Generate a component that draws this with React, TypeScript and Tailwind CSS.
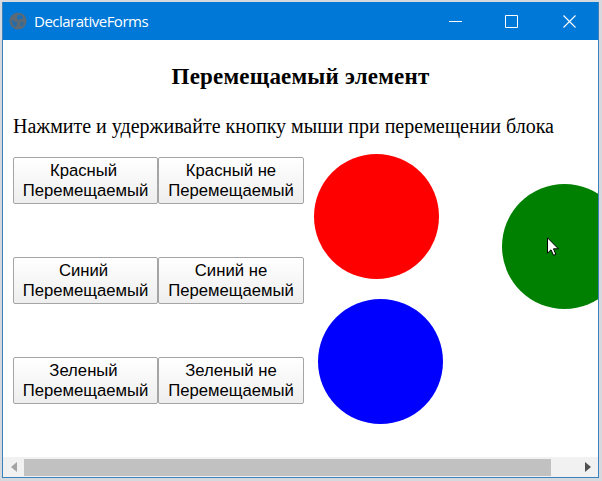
import React from "react";

const rows = ["Красный", "Синий", "Зеленый"];

function ActionButton({ label, width, labelClass = "" }: { label: string; width: string; labelClass?: string }) {
  return (
    <button
      className={`${width} h-[47px] shrink-0 rounded-[2px] border border-[#a5a5a5] bg-linear-to-b from-white to-[#eeeeee] text-center font-['Liberation_Sans',Arial,sans-serif] text-[16.7px] leading-[20px] text-black`}
    >
      <span className={`block ${labelClass}`}>{label}</span>
      <span className="block">Перемещаемый</span>
    </button>
  );
}

function TitleBar() {
  return (
    <header className="flex h-[38px] shrink-0 items-center bg-[#0078d7] pl-[6px] text-white">
      <svg width="18" height="18" viewBox="0 0 18 18" className="shrink-0">
        <circle cx="9" cy="9" r="8.6" fill="#5c6a76" />
        <path d="M8.5 3.2 11.5 2.8 14.3 5.5 12.5 7.6 10.8 6.5 9.8 8.2 8 6.5Z" fill="#1d6fb5" />
        <path d="M2.2 7.5 5 9.3 7.6 10 8.2 12.3 6.5 15.2 4 13.4Z" fill="#2a6ba6" />
        <path d="M11 10.8 14.8 10 14 13.2 11.5 14.8Z" fill="#2f6a9e" />
      </svg>
      <h1 className="ml-[7px] grow font-['Open_Sans','Noto_Sans',sans-serif] text-[15px] leading-[20px] tracking-[-0.5px]">
        DeclarativeForms
      </h1>
      <div className="flex">
        <button aria-label="Minimize" className="flex w-[53px] justify-center">
          <svg width="13" height="13" viewBox="0 0 13 13" stroke="white" fill="none"><path d="M0 6.5H13" /></svg>
        </button>
        <button aria-label="Maximize" className="flex w-[59px] justify-center">
          <svg width="13" height="13" viewBox="0 0 13 13" stroke="white" fill="none"><path d="M.5 .5H12.5V12.5H.5Z" /></svg>
        </button>
        <button aria-label="Close" className="flex w-[57px] justify-center">
          <svg width="13" height="13" viewBox="0 0 13 13" stroke="white" strokeWidth="1.1" fill="none"><path d="M.5 .5 12.5 12.5M12.5 .5 .5 12.5" /></svg>
        </button>
      </div>
    </header>
  );
}

export default function App() {
  return (
    <div className="h-[481px] w-[602px] overflow-hidden bg-[#d6d9de] pt-[2px] pl-[2px]">
      <div className="flex h-[476px] w-[597px] flex-col border border-t-0 border-[#3b82bd]">
        <TitleBar />
        <main className="relative grow overflow-hidden bg-white px-[10px] text-black">
          <h2 className="mt-[22px] text-center font-['Liberation_Serif',serif] text-[23px] leading-[30px] font-bold tracking-[0.2px] whitespace-nowrap">
            Перемещаемый элемент
          </h2>
          <p className="mt-[19px] font-['Liberation_Serif',serif] text-[20px] leading-[30px] whitespace-nowrap">
            Нажмите и удерживайте кнопку мыши при перемещении блока
          </p>
          <div className="mt-[16px] flex flex-col gap-[53px]">
            {rows.map((name) => (
              <div key={name} className="flex">
                <ActionButton label={name} width="w-[145px]" labelClass="pr-[4px]" />
                <ActionButton label={`${name} не`} width="w-[146px]" />
              </div>
            ))}
          </div>
          <div className="absolute top-[114px] left-[311px] size-[125px] rounded-full bg-[#ff0000]" />
          <div className="absolute top-[259px] left-[315px] size-[125px] rounded-full bg-[#0000ff]" />
          <div className="absolute top-[144px] left-[499px] size-[125px] rounded-full bg-[#008000]" />
          <svg width="12" height="19" viewBox="0 0 12 19" className="absolute top-[197px] left-[544px]">
            <path d="M.5 .8V16.2L4 12.8 6.5 18.3 8.8 17.3 6.5 11.8H11.4Z" fill="white" stroke="black" strokeWidth="1" />
          </svg>
        </main>
        <div className="flex h-[20px] shrink-0 items-stretch bg-[#f1f1f1]">
          <div className="flex w-[21px] items-center justify-center">
            <svg width="6" height="10" viewBox="0 0 6 10"><path d="M6 0V10L0 5Z" fill="#a3a3a3" /></svg>
          </div>
          <div className="mt-[2px] mb-[1px] w-[527px] bg-[#c1c1c1]" />
          <div className="flex grow items-center justify-center">
            <svg width="6" height="10" viewBox="0 0 6 10" className="ml-[26px]"><path d="M0 0V10L6 5Z" fill="#505050" /></svg>
          </div>
        </div>
      </div>
    </div>
  );
}
